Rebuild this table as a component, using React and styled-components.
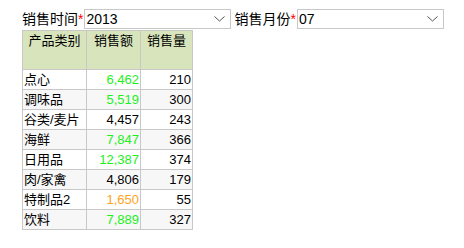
import styled, { createGlobalStyle } from 'styled-components'

const GlobalStyle = createGlobalStyle`
    body {
        margin: 0;
        background: #ffffff;
        font-family: "Liberation Sans", "Noto Sans CJK SC", sans-serif;
        font-size: 13px;
        color: #000000;
    }
`

const rows = [
    { name: '点心', amount: '6,462', tone: 'green', qty: 210 },
    { name: '调味品', amount: '5,519', tone: 'green', qty: 300 },
    { name: '谷类/麦片', amount: '4,457', tone: 'plain', qty: 243 },
    { name: '海鲜', amount: '7,847', tone: 'green', qty: 366 },
    { name: '日用品', amount: '12,387', tone: 'green', qty: 374 },
    { name: '肉/家禽', amount: '4,806', tone: 'plain', qty: 179 },
    { name: '特制品2', amount: '1,650', tone: 'orange', qty: 55 },
    { name: '饮料', amount: '7,889', tone: 'green', qty: 327 },
]

const toneColors = {
    green: '#1cf01c',
    orange: '#ffa31a',
    plain: '#000000',
}

const Chevron = () => (
    <svg width="11" height="6" viewBox="0 0 11 6">
        <path d="M0.5 0.5 L5.5 5 L10.5 0.5" fill="none" stroke="#555" strokeWidth="1" />
    </svg>
)

const App = () => {
    return (
        <Page>
            <GlobalStyle />
            <FilterBar>
                <Field>
                    <Label>销售时间<Star>*</Star></Label>
                    <Select>
                        <span>2013</span>
                        <Chevron />
                    </Select>
                </Field>
                <Field>
                    <Label>销售月份<Star>*</Star></Label>
                    <Select>
                        <span>07</span>
                        <Chevron />
                    </Select>
                </Field>
            </FilterBar>
            <Table>
                <colgroup>
                    <col style={{ width: '64px' }} />
                    <col style={{ width: '54px' }} />
                    <col style={{ width: '52px' }} />
                </colgroup>
                <thead>
                    <tr>
                        <HeadCell>产品类别</HeadCell>
                        <HeadCell>销售额</HeadCell>
                        <HeadCell>销售量</HeadCell>
                    </tr>
                </thead>
                <tbody>
                    {rows.map((row, index) => (
                        <Row key={row.name} striped={index % 2 === 1}>
                            <Cell>{row.name}</Cell>
                            <NumCell color={toneColors[row.tone]}>{row.amount}</NumCell>
                            <NumCell color="#000000">{row.qty}</NumCell>
                        </Row>
                    ))}
                </tbody>
            </Table>
        </Page>
    )
}

export default App

const Page = styled.div`
    padding: 9px 0 0 22px;
`
const FilterBar = styled.div`
    display: flex;
    align-items: center;
    gap: 3px;
`
const Field = styled.div`
    display: flex;
    align-items: center;
    gap: 1px;
`
const Label = styled.span`
    font-size: 14px;
    line-height: 20px;
    white-space: nowrap;
`
const Star = styled.span`
    color: #ff0000;
`
const Select = styled.div`
    box-sizing: border-box;
    width: 147px;
    height: 20px;
    border: 1px solid #c8c8c8;
    display: flex;
    align-items: center;
    justify-content: space-between;
    padding: 0 5px 0 1px;
    font-size: 14px;
    line-height: 18px;
`
const Table = styled.table`
    border-collapse: collapse;
    table-layout: fixed;
    width: 171px;
    margin-top: 1px;
`
const HeadCell = styled.th`
    height: 36px;
    padding: 2px 0 0 0;
    background: #d8e4bc;
    border: 1px solid #c8c8c8;
    font-weight: normal;
    text-align: center;
    vertical-align: top;
    line-height: 16px;
`
const Row = styled.tr`
    background: ${props => props.striped ? '#f7f7f7' : '#ffffff'};
`
const Cell = styled.td`
    height: 19px;
    padding: 0 1px;
    border: 1px solid #c8c8c8;
    line-height: 18px;
    white-space: nowrap;
`
const NumCell = styled(Cell)`
    text-align: right;
    color: ${props => props.color};
`
